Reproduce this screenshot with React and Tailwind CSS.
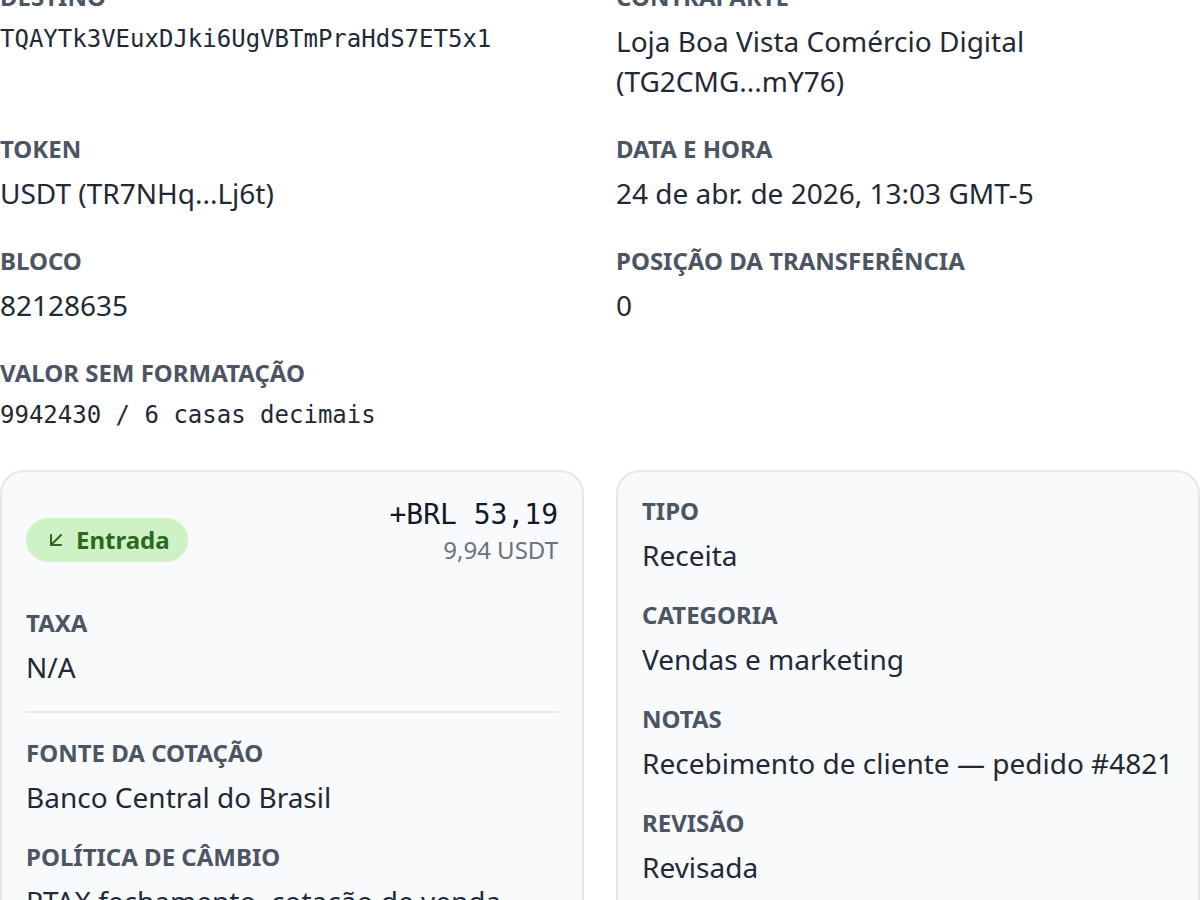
import React from "react";
import { ArrowDownLeft } from "lucide-react";

const sans = "font-['Noto_Sans',sans-serif]";
const mono = "font-['DejaVu_Sans_Mono',monospace]";

function Label({ children }) {
  return (
    <div className={`${sans} text-[24px] leading-[32px] font-bold uppercase text-[#4b5563]`}>
      {children}
    </div>
  );
}

function Value({ children, isMono }) {
  return isMono ? (
    <div className={`${mono} mt-[10px] text-[24px] leading-[32px] text-[#1f2937]`}>{children}</div>
  ) : (
    <div className={`${sans} mt-2 text-[28px] leading-[40px] text-[#1f2937]`}>{children}</div>
  );
}

function Field({ label, value, isMono }) {
  return (
    <div>
      <Label>{label}</Label>
      <Value isMono={isMono}>{value}</Value>
    </div>
  );
}

export default function App() {
  return (
    <div className={`${sans} bg-white min-h-[900px] overflow-hidden`}>
      <div className="-mt-[19px]">
        <div className="grid grid-cols-2 gap-x-8 gap-y-8">
          <Field label="Destino" value="TQAYTk3VEuxDJki6UgVBTmPraHdS7ET5x1" isMono />
          <Field label="Contraparte" value="Loja Boa Vista Comércio Digital (TG2CMG...mY76)" />
          <Field label="Token" value="USDT (TR7NHq...Lj6t)" />
          <Field label="Data e hora" value="24 de abr. de 2026, 13:03 GMT-5" />
          <Field label="Bloco" value="82128635" />
          <Field label="Posição da transferência" value="0" />
          <Field label="Valor sem formatação" value="9942430 / 6 casas decimais" isMono />
        </div>

        <div className="mt-[39px] grid grid-cols-2 gap-8">
          <div className="rounded-[24px] border-2 border-[#e5e7eb] bg-[#f9fafb] p-6">
            <div className="flex items-start justify-between">
              <div className="mt-[22px] flex items-center gap-2 rounded-full bg-[#cff1c6] px-[18px] py-[6px] text-[24px] leading-[32px] font-bold text-[#2b6a1e]">
                <ArrowDownLeft size={24} strokeWidth={2} />
                <span>Entrada</span>
              </div>
              <div className="text-right">
                <div className={`${mono} text-[28px] leading-[38px] text-[#111827]`}>+BRL 53,19</div>
                <div className="text-[24px] leading-[32px] text-[#6b7280]">9,94 USDT</div>
              </div>
            </div>
            <div className="mt-[41px]">
              <Field label="Taxa" value="N/A" />
            </div>
            <div className="my-6 h-[2px] bg-[#e5e7eb]" />
            <div className="flex flex-col gap-6">
              <Field label="Fonte da cotação" value="Banco Central do Brasil" />
              <Field label="Política de câmbio" value="PTAX fechamento, cotação de venda" />
            </div>
          </div>

          <div className="rounded-[24px] border-2 border-[#e5e7eb] bg-[#f9fafb] px-6 pt-[23px] pb-6">
            <div className="flex flex-col gap-6">
              <Field label="Tipo" value="Receita" />
              <Field label="Categoria" value="Vendas e marketing" />
              <Field label="Notas" value="Recebimento de cliente — pedido #4821" />
              <Field label="Revisão" value="Revisada" />
              <Field label="Revisado por" value="Ana Souza" />
            </div>
          </div>
        </div>
      </div>
    </div>
  );
}
